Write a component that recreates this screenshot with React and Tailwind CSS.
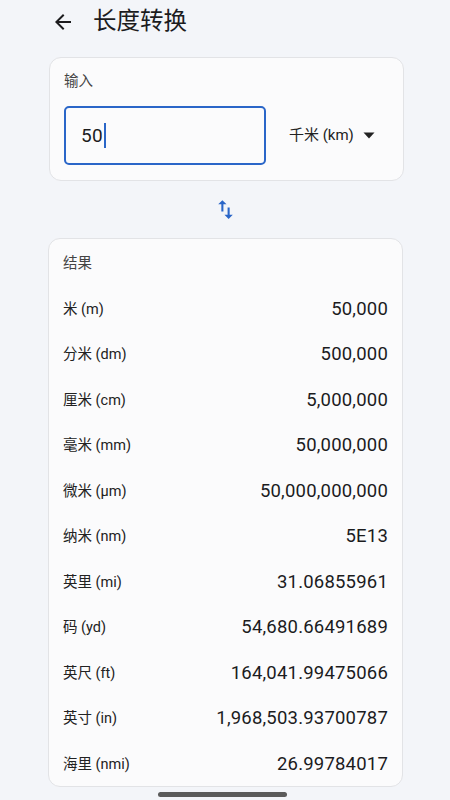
export default function App() {
  const rows = [
    ["米 (m)", "50,000"],
    ["分米 (dm)", "500,000"],
    ["厘米 (cm)", "5,000,000"],
    ["毫米 (mm)", "50,000,000"],
    ["微米 (µm)", "50,000,000,000"],
    ["纳米 (nm)", "5E13"],
    ["英里 (mi)", "31.06855961"],
    ["码 (yd)", "54,680.66491689"],
    ["英尺 (ft)", "164,041.99475066"],
    ["英寸 (in)", "1,968,503.93700787"],
    ["海里 (nmi)", "26.99784017"],
  ];
  const font = { fontFamily: 'Roboto, "Noto Sans CJK SC", sans-serif' };
  return (
    <div className="w-[450px] h-[800px] bg-[#f3f5f9] text-[#1c1c1e] overflow-hidden relative" style={font}>
      <div className="h-[44px] flex items-center pl-[51px]">
        <svg width="24" height="24" viewBox="0 0 24 24" className="text-[#1c1c1e]">
          <path d="M20 11H7.83l5.59-5.59L12 4l-8 8 8 8 1.41-1.41L7.83 13H20v-2z" fill="currentColor" />
        </svg>
        <span className="ml-[18px] text-[23.5px] leading-none">长度转换</span>
      </div>
      <div className="ml-[49px] mt-[13px] w-[355px] h-[124px] rounded-[12px] border border-[#e2e3e6] bg-[#fbfbfc] px-[14px] pt-[14px]">
        <div className="text-[14.5px] leading-[20px] text-[#444]">输入</div>
        <div className="flex items-center mt-[14px]">
          <div className="w-[202px] h-[59px] rounded-[5px] border-2 border-[#2a66c8] flex items-center pl-[15px]">
            <span className="text-[19px] leading-none text-[#1c1c1e] tracking-[0.3px]">50</span>
            <span className="w-[2px] h-[25px] bg-[#2a66c8] ml-[1px]"></span>
          </div>
          <div className="flex items-center ml-[23px]">
            <span className="text-[15px] text-[#222]">千米 (km)</span>
            <svg width="12" height="7" viewBox="0 0 12 7" className="ml-[9px]">
              <path d="M0.5 0.5h11L6 6.5z" fill="#222" />
            </svg>
          </div>
        </div>
      </div>
      <div className="h-[57px] flex items-center justify-center">
        <svg width="25" height="25" viewBox="0 0 24 24">
          <path d="M16 17.01V10h-2v7.01h-3L15 21l4-3.99h-3zM9 3L5 6.99h3V14h2V6.99h3L9 3z" fill="#2a66c8" />
        </svg>
      </div>
      <div className="ml-[48px] w-[355px] h-[549px] rounded-[12px] border border-[#e2e3e6] bg-[#fbfbfc] px-[14px] pt-[15px]">
        <div className="text-[14.5px] leading-[20px] text-[#444]">结果</div>
        <div className="mt-[13px]">
          {rows.map(([l, v]) => (
            <div key={l} className="h-[45.5px] flex items-center justify-between">
              <span className="text-[14.5px] text-[#222]">{l}</span>
              <span className="text-[18.5px] tracking-[0.2px] text-[#1c1c1e]">{v}</span>
            </div>
          ))}
        </div>
      </div>
      <div className="absolute left-[158px] top-[792px] w-[129px] h-[5px] rounded-full bg-[#5b5b5b]"></div>
    </div>
  );
}
